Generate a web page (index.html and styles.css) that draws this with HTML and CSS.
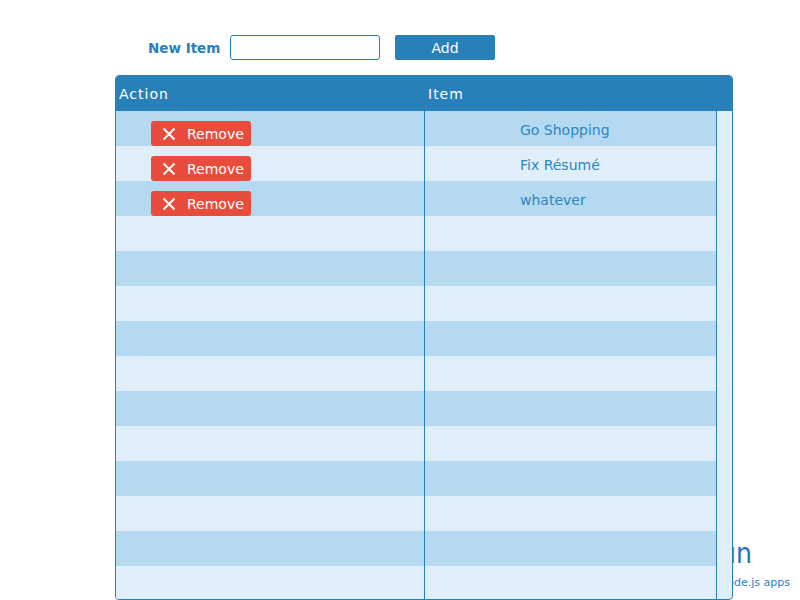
FILE: index.html
```html
<!DOCTYPE html>
<html>
<head>
<meta charset="utf-8">
<link rel="stylesheet" href="styles.css">
</head>
<body>
<div class="promo">
  <div class="promo-title">Run</div>
  <div class="promo-sub">Build Node.js apps</div>
</div>
<div class="app">
  <form class="new-item">
    <label class="new-label">New Item</label>
    <input class="new-input" type="text">
    <button class="add-btn" type="button">Add</button>
  </form>
  <div class="table">
    <div class="thead">
      <div class="th th-action">Action</div>
      <div class="th th-item">Item</div>
    </div>
    <div class="tbody">
      <div class="rows">
        <div class="row"><div class="cell c-action"><button class="rm-btn" type="button"><svg class="x" width="14" height="14" viewBox="0 0 14 14"><path d="M1.5 1.5L12.5 12.5M12.5 1.5L1.5 12.5" stroke="#fff" stroke-width="2" fill="none"/></svg>Remove</button></div><div class="cell c-item">Go Shopping</div></div>
        <div class="row"><div class="cell c-action"><button class="rm-btn" type="button"><svg class="x" width="14" height="14" viewBox="0 0 14 14"><path d="M1.5 1.5L12.5 12.5M12.5 1.5L1.5 12.5" stroke="#fff" stroke-width="2" fill="none"/></svg>Remove</button></div><div class="cell c-item">Fix Résumé</div></div>
        <div class="row"><div class="cell c-action"><button class="rm-btn" type="button"><svg class="x" width="14" height="14" viewBox="0 0 14 14"><path d="M1.5 1.5L12.5 12.5M12.5 1.5L1.5 12.5" stroke="#fff" stroke-width="2" fill="none"/></svg>Remove</button></div><div class="cell c-item">whatever</div></div>
        <div class="row"><div class="cell c-action"></div><div class="cell c-item"></div></div>
        <div class="row"><div class="cell c-action"></div><div class="cell c-item"></div></div>
        <div class="row"><div class="cell c-action"></div><div class="cell c-item"></div></div>
        <div class="row"><div class="cell c-action"></div><div class="cell c-item"></div></div>
        <div class="row"><div class="cell c-action"></div><div class="cell c-item"></div></div>
        <div class="row"><div class="cell c-action"></div><div class="cell c-item"></div></div>
        <div class="row"><div class="cell c-action"></div><div class="cell c-item"></div></div>
        <div class="row"><div class="cell c-action"></div><div class="cell c-item"></div></div>
        <div class="row"><div class="cell c-action"></div><div class="cell c-item"></div></div>
        <div class="row"><div class="cell c-action"></div><div class="cell c-item"></div></div>
        <div class="row"><div class="cell c-action"></div><div class="cell c-item"></div></div>
      </div>
      <div class="gutter"></div>
    </div>
  </div>
</div>
</body>
</html>
```
FILE: styles.css
```css
html, body {
  margin: 0;
  padding: 0;
  background: #fff;
  height: 600px;
  overflow: hidden;
}
body {
  font-family: "DejaVu Sans", "Liberation Sans", sans-serif;
  position: relative;
}
.promo {
  position: absolute;
  right: 10px;
  top: 537px;
  text-align: right;
  color: #1f73b7;
  z-index: 0;
}
.promo-title {
  font-family: "DejaVu Sans Condensed", "Liberation Sans Narrow", "DejaVu Sans", sans-serif;
  font-size: 28px;
  line-height: 34px;
  margin-right: 38px;
}
.promo-sub {
  font-size: 11px;
  line-height: 14px;
  margin-top: 5px;
  color: #2a7fc1;
}
.app {
  position: relative;
  z-index: 1;
  padding-top: 35px;
}
.new-item {
  display: flex;
  align-items: center;
  margin: 0 0 15px 148px;
  height: 25px;
}
.new-label {
  font-weight: bold;
  font-size: 13.5px;
  color: #2980b9;
  width: 82px;
}
.new-input {
  box-sizing: border-box;
  width: 150px;
  height: 25px;
  border: 1px solid #2980b9;
  border-radius: 3px;
  margin: 0;
  padding: 0 4px;
  background: #fff;
}
.add-btn {
  box-sizing: border-box;
  width: 100px;
  height: 25px;
  margin: 0 0 0 15px;
  border: none;
  border-radius: 2px;
  background: #2980b9;
  color: #ffffff;
  font-family: "DejaVu Sans", sans-serif;
  font-size: 14px;
  font-weight: normal;
  padding: 0;
}
.table {
  margin-left: 115px;
  width: 618px;
  box-sizing: border-box;
  height: 525px;
  border: 1px solid #2980b9;
  border-radius: 4px;
  overflow: hidden;
  background: #e0eefa;
}
.thead {
  display: flex;
  height: 35px;
  background: #2980b9;
  color: #fff;
  font-size: 14px;
  letter-spacing: 1px;
  align-items: center;
}
.th-action {
  width: 309px;
  padding-left: 3px;
  box-sizing: border-box;
}
.th-item {
  padding-left: 3px;
}
.tbody {
  display: flex;
}
.rows {
  width: 600px;
}
.gutter {
  flex: 1;
  border-left: 1px solid #2980b9;
  height: 500px;
}
.row {
  display: flex;
  height: 35px;
  background: #e0eefa;
}
.row:nth-child(odd) {
  background: #b5d9f1;
}
.cell {
  box-sizing: border-box;
}
.c-action {
  width: 309px;
  border-right: 1px solid #2980b9;
  padding: 10px 0 0 35px;
}
.c-item {
  flex: 1;
  padding: 11px 0 0 95px;
  font-size: 14px;
  line-height: 16px;
  color: #2e86c1;
}
.rm-btn {
  display: flex;
  align-items: center;
  box-sizing: border-box;
  width: 100px;
  height: 25px;
  margin: 0;
  padding: 0 0 0 11px;
  border: none;
  border-radius: 3px;
  background: #e74c3c;
  color: #fff;
  font-family: "DejaVu Sans", sans-serif;
  font-size: 14px;
}
.x {
  margin-right: 11px;
  flex: none;
}
```
